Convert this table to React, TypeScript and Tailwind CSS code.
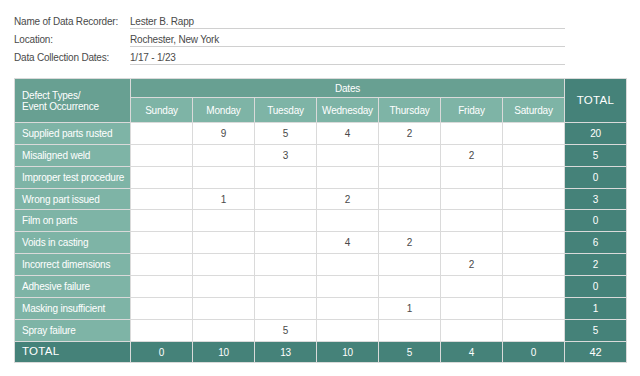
import React from "react";

const days = ["Sunday", "Monday", "Tuesday", "Wednesday", "Thursday", "Friday", "Saturday"];

const rows: { label: string; v: (number | null)[] }[] = [
  { label: "Supplied parts rusted", v: [null, 9, 5, 4, 2, null, null] },
  { label: "Misaligned weld", v: [null, null, 3, null, null, 2, null] },
  { label: "Improper test procedure", v: [null, null, null, null, null, null, null] },
  { label: "Wrong part issued", v: [null, 1, null, 2, null, null, null] },
  { label: "Film on parts", v: [null, null, null, null, null, null, null] },
  { label: "Voids in casting", v: [null, null, null, 4, 2, null, null] },
  { label: "Incorrect dimensions", v: [null, null, null, null, null, 2, null] },
  { label: "Adhesive failure", v: [null, null, null, null, null, null, null] },
  { label: "Masking insufficient", v: [null, null, null, null, 1, null, null] },
  { label: "Spray failure", v: [null, null, 5, null, null, null, null] },
];

const info = [
  ["Name of Data Recorder:", "Lester B. Rapp"],
  ["Location:", "Rochester, New York"],
  ["Data Collection Dates:", "1/17 - 1/23"],
];

export default function App() {
  const colTotals = days.map((_, i) => rows.reduce((s, r) => s + (r.v[i] ?? 0), 0));
  const grand = colTotals.reduce((a, b) => a + b, 0);
  return (
    <div
      className="w-[640px] h-[376px] bg-white text-[10px] tracking-[-0.2px] text-[#4a4a4a]"
      style={{ fontFamily: '"Liberation Sans", Arial, sans-serif' }}
    >
      <div className="pl-[14px] pt-[11px]">
        {info.map(([l, v]) => (
          <div key={l} className="flex h-[18px]">
            <div className="w-[116px] flex items-end pb-px leading-[13px]">{l}</div>
            <div className="w-[435px] flex items-end border-b border-[#d0d0d0] leading-[13px]">{v}</div>
          </div>
        ))}
      </div>

      <div className="ml-[14px] mt-[13px] w-fit grid grid-cols-[115px_repeat(8,61px)] grid-rows-[18px_24px_21px_21px_21px_20px_21px_21px_21px_21px_21px_21px_20px] gap-px p-px bg-[#dadada] text-white">
        <div className="row-span-2 bg-[#68a092] flex flex-col justify-center pl-[7px] leading-[11px]">
          <span>Defect Types/</span>
          <span>Event Occurrence</span>
        </div>
        <div className="col-span-7 bg-[#68a092] flex items-center justify-center">Dates</div>
        <div className="row-span-2 bg-[#458279] flex items-center justify-center text-[11.5px] tracking-[0.3px]">TOTAL</div>
        {days.map((d) => (
          <div key={d} className="bg-[#7eb4a6] flex items-center justify-center">
            {d}
          </div>
        ))}
        {rows.map((r) => {
          const t = r.v.reduce<number>((s, x) => s + (x ?? 0), 0);
          return (
            <React.Fragment key={r.label}>
              <div className="bg-[#7eb4a6] flex items-center pl-[7px]">{r.label}</div>
              {r.v.map((x, i) => (
                <div key={i} className="bg-white flex items-center justify-center text-[#4a4a4a]">
                  {x ?? ""}
                </div>
              ))}
              <div className="bg-[#458279] flex items-center justify-center">{t}</div>
            </React.Fragment>
          );
        })}
        <div className="bg-[#458279] flex items-center pl-[7px] text-[11.5px] tracking-[0.3px]">TOTAL</div>
        {colTotals.map((t, i) => (
          <div key={i} className="bg-[#458279] flex items-center justify-center">
            {t}
          </div>
        ))}
        <div className="bg-[#458279] flex items-center justify-center text-[11px]">{grand}</div>
      </div>
    </div>
  );
}
